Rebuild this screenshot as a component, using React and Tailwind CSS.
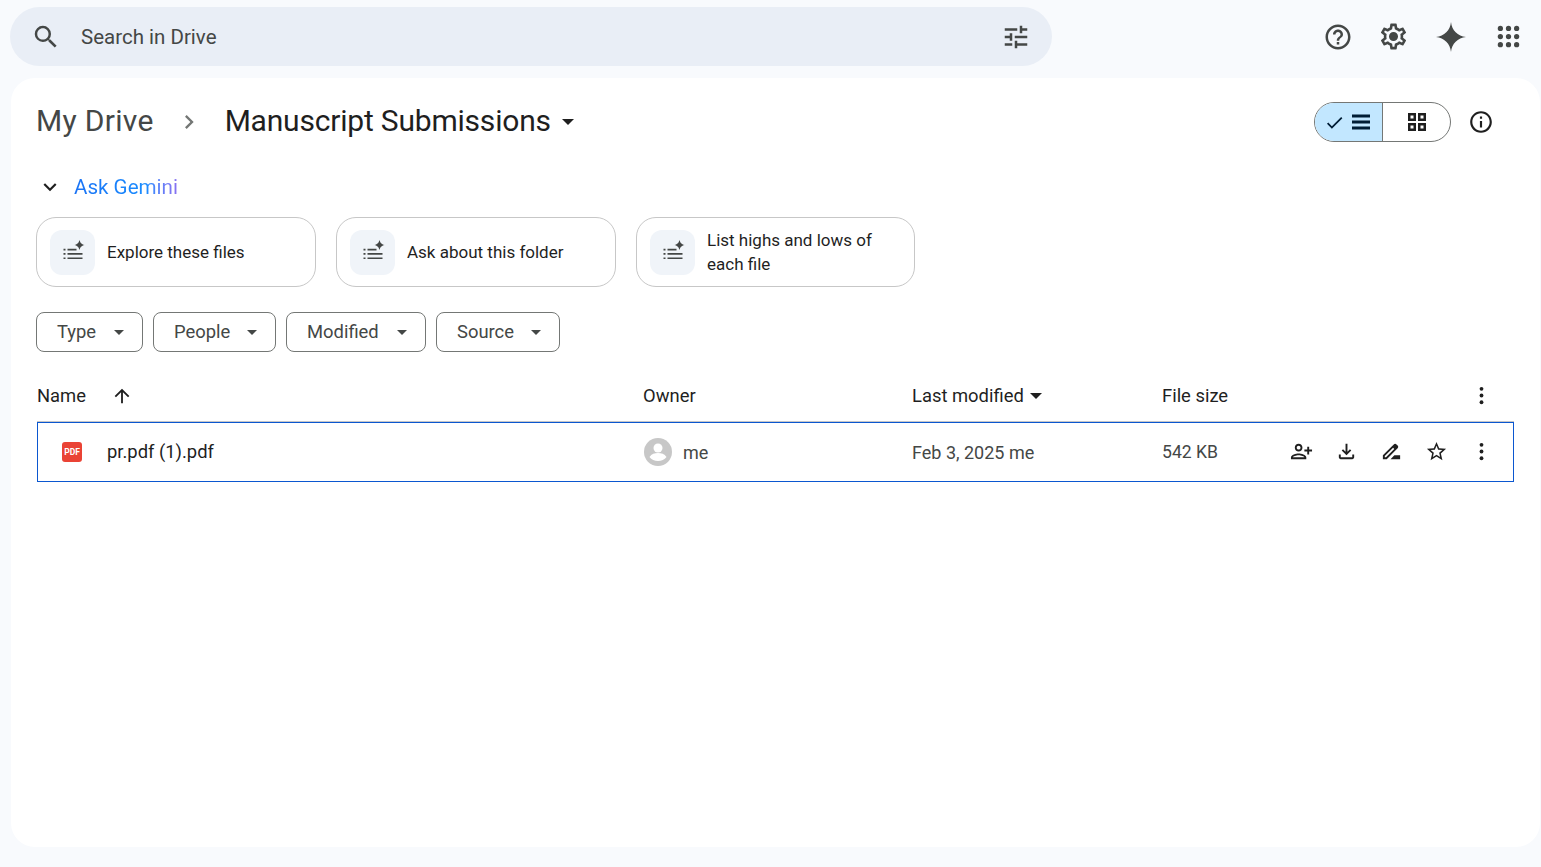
import React from "react";

function Icon({ d, className = "", flip }) {
  return (
    <svg viewBox="0 0 24 24" fill="currentColor" className={className}>
      <path d={d} transform={flip ? "matrix(-1 0 0 1 24 0)" : undefined} />
    </svg>
  );
}

const paths = {
  search: "M15.5 14h-.79l-.28-.27A6.471 6.471 0 0 0 16 9.5 6.5 6.5 0 1 0 9.5 16c1.61 0 3.09-.59 4.23-1.57l.27.28v.79l5 4.99L20.49 19l-4.99-5zm-6 0C7.01 14 5 11.99 5 9.5S7.01 5 9.5 5 14 7.01 14 9.5 11.99 14 9.5 14z",
  tune: "M3 17v2h6v-2H3zM3 5v2h10V5H3zm10 16v-2h8v-2h-8v-2h-2v6h2zM7 9v2H3v2h4v2h2V9H7zm14 4v-2H11v2h10zm-6-4h2V7h4V5h-4V3h-2v6z",
  help: "M11 18h2v-2h-2v2zm1-16C6.48 2 2 6.48 2 12s4.48 10 10 10 10-4.48 10-10S17.52 2 12 2zm0 18c-4.41 0-8-3.59-8-8s3.59-8 8-8 8 3.59 8 8-3.59 8-8 8zm0-14c-2.21 0-4 1.79-4 4h2c0-1.1.9-2 2-2s2 .9 2 2c0 2-3 1.75-3 5h2c0-2.25 3-2.5 3-5 0-2.21-1.79-4-4-4z",
  settings: "M19.43 12.98c.04-.32.07-.64.07-.98 0-.34-.03-.66-.07-.98l2.11-1.65c.19-.15.24-.42.12-.64l-2-3.46c-.09-.16-.26-.25-.44-.25-.06 0-.12.01-.17.03l-2.49 1c-.52-.4-1.08-.73-1.69-.98l-.38-2.65C14.46 2.18 14.25 2 14 2h-4c-.25 0-.46.18-.49.42l-.38 2.65c-.61.25-1.17.59-1.69.98l-2.49-1c-.06-.02-.12-.03-.18-.03-.17 0-.34.09-.43.25l-2 3.46c-.13.22-.07.49.12.64l2.11 1.65c-.04.32-.07.65-.07.98 0 .33.03.66.07.98l-2.11 1.65c-.19.15-.24.42-.12.64l2 3.46c.09.16.26.25.44.25.06 0 .12-.01.17-.03l2.49-1c.52.4 1.08.73 1.69.98l.38 2.65c.03.24.24.42.49.42h4c.25 0 .46-.18.49-.42l.38-2.65c.61-.25 1.17-.59 1.69-.98l2.49 1c.06.02.12.03.18.03.17 0 .34-.09.43-.25l2-3.46c.12-.22.07-.49-.12-.64l-2.11-1.65zm-1.98-1.71c.04.31.05.52.05.73 0 .21-.02.43-.05.73l-.14 1.13.89.7 1.08.84-.7 1.21-1.27-.51-1.04-.42-.9.68c-.43.32-.84.56-1.25.73l-1.06.43-.16 1.13-.2 1.35h-1.4l-.19-1.35-.16-1.13-1.06-.43c-.43-.18-.83-.41-1.23-.71l-.91-.7-1.06.43-1.27.51-.7-1.21 1.08-.84.89-.7-.14-1.13c-.03-.31-.05-.54-.05-.74s.02-.43.05-.73l.14-1.13-.89-.7-1.08-.84.7-1.21 1.27.51 1.04.42.9-.68c.43-.32.84-.56 1.25-.73l1.06-.43.16-1.13.2-1.35h1.39l.19 1.35.16 1.13 1.06.43c.43.18.83.41 1.23.71l.91.7 1.06-.43 1.27-.51.7 1.21-1.07.85-.89.7.14 1.13zM12 8.5a3.5 3.5 0 1 0 0 7 3.5 3.5 0 0 0 0-7z",
  spark: "M12 2C12.5 7.5 16.5 11.5 22 12 16.5 12.5 12.5 16.5 12 22 11.5 16.5 7.5 12.5 2 12 7.5 11.5 11.5 7.5 12 2z",
  info: "M11 7h2v2h-2zm0 4h2v6h-2zm1-9C6.48 2 2 6.48 2 12s4.48 10 10 10 10-4.48 10-10S17.52 2 12 2zm0 18c-4.41 0-8-3.59-8-8s3.59-8 8-8 8 3.59 8 8-3.59 8-8 8z",
  check: "M9 16.17L4.83 12l-1.42 1.41L9 19 21 7l-1.41-1.41z",
  lines: "M3 4.500h18v3H3zm0 6h18v3H3zm0 6h18v3H3z",
  grid: "M3 3v8h8V3H3zm5.500 5.500h-3v-3h3v3zM3 13v8h8v-8H3zm5.500 5.500h-3v-3h3v3zM13 3v8h8V3h-8zm5.500 5.500h-3v-3h3v3zM13 13v8h8v-8h-8zm5.500 5.500h-3v-3h3v3z",
  chevronRight: "M10 6L8.59 7.41 13.17 12l-4.58 4.59L10 18l6-6z",
  chevronDown: "M7.41 8.59L12 13.17l4.59-4.58L18 10l-6 6-6-6z",
  arrowUp: "M4 12l1.41 1.41L11 7.83V20h2V7.83l5.58 5.59L20 12l-8-8-8 8z",
  addPerson: "M15 12c2.21 0 4-1.79 4-4s-1.79-4-4-4-4 1.79-4 4 1.79 4 4 4zm0-6c1.1 0 2 .9 2 2s-.9 2-2 2-2-.9-2-2 .9-2 2-2zm0 8c-2.67 0-8 1.34-8 4v2h16v-2c0-2.66-5.33-4-8-4zm-6 4c.22-.72 3.31-2 6-2 2.7 0 5.8 1.29 6 2H9zm-3-3v-3h3v-2H6V7H4v3H1v2h3v3h2z",
  download: "M18 15v3H6v-3H4v3c0 1.1.9 2 2 2h12c1.1 0 2-.9 2-2v-3h-2zm-1-4l-1.41-1.41L13 12.17V4h-2v8.17L8.41 9.59 7 11l5 5 5-5z",
  rename: "M18.41 5.8L17.2 4.59c-.78-.78-2.05-.78-2.83 0l-2.68 2.68L3 15.96V20h4.04l8.74-8.74 2.63-2.63c.79-.78.79-2.05 0-2.83zM6.21 18H5v-1.21l8.66-8.66 1.21 1.21L6.21 18zM11 20l4-4h6v4H11z",
  star: "M22 9.24l-7.19-.62L12 2 9.19 8.63 2 9.24l5.46 4.73L5.82 21 12 17.27 18.18 21l-1.63-7.03L22 9.24zM12 15.4l-3.76 2.27 1-4.28-3.32-2.88 4.38-.38L12 6.1l1.71 4.04 4.38.38-3.32 2.88 1 4.28L12 15.4z",
};

function Caret({ className = "" }) {
  return (
    <svg viewBox="0 0 10 5" fill="currentColor" className={className}>
      <path d="M0 0h10L5 5z" />
    </svg>
  );
}

function AppsIcon() {
  const spots = [3.5, 10, 16.5];
  return (
    <svg viewBox="0 0 20 20" fill="#444746" className="w-[25px] h-[25px]">
      {spots.map((y) =>
        spots.map((x) => <circle key={`${x}-${y}`} cx={x} cy={y} r="2.100" />)
      )}
    </svg>
  );
}

function MoreIcon() {
  return (
    <svg viewBox="0 0 24 24" fill="#1f1f1f" className="w-[23px] h-[23px]">
      <circle cx="12" cy="5" r="2" />
      <circle cx="12" cy="12" r="2" />
      <circle cx="12" cy="19" r="2" />
    </svg>
  );
}

function SparkList() {
  return (
    <svg viewBox="0 0 24 24" fill="#444746" className="w-6 h-6">
      <path d="M18.500 0c.9 3.100 1.900 4.100 5 5-3.100.9-4.100 1.900-5 5-.9-3.100-1.900-4.100-5-5 3.100-.9 4.100-1.900 5-5z" />
      <path d="M6.500 8.700h9v1.700h-9zM6.500 13h15v1.700h-15zM6.500 17.400h15v1.700h-15z" />
      <path d="M2.500 8.700h2v1.700h-2zM2.500 13h2v1.700h-2zM2.500 17.400h2v1.700h-2z" />
    </svg>
  );
}

function Suggestion({ children, width = "w-[280px]" }) {
  return (
    <div className={`flex items-center h-[70px] border border-[#c7c7c7] rounded-[20px] pl-[13px] pr-4 gap-[12px] ${width}`}>
      <div className="w-[45px] h-[45px] shrink-0 rounded-xl bg-[#f0f4f9] flex items-center justify-center">
        <SparkList />
      </div>
      <div className="text-[17px] leading-6 text-[#1f1f1f]">{children}</div>
    </div>
  );
}

function Filter({ label, width }) {
  return (
    <button className={`flex items-center justify-between h-10 border border-[#747775] rounded-lg pl-5 pr-[18px] text-[18.4px] text-[#444746] ${width}`}>
      <span>{label}</span>
      <Caret className="w-[10px] h-[5px] text-[#444746]" />
    </button>
  );
}

export default function App() {
  return (
    <div className="h-[867px] bg-[#f8fafd] flex flex-col font-['Roboto',sans-serif] overflow-hidden">
      <header className="h-[78px] shrink-0 flex items-start pt-[7px] pl-[10px]">
        <div className="w-[1042px] h-[59px] rounded-[30px] bg-[#e9eef6] flex items-center pl-[21px] pr-[21px] text-[#444746]">
          <Icon d={paths.search} className="w-[30px] h-[30px]" />
          <span className="ml-5 pt-[2px] text-[20.5px] flex-1">Search in Drive</span>
          <Icon d={paths.tune} className="w-[30px] h-[30px]" />
        </div>
        <div className="flex items-center ml-[271px] h-[59px] text-[#444746]">
          <Icon d={paths.help} className="w-[30px] h-[30px]" />
          <Icon d={paths.settings} className="w-[31px] h-[31px] ml-[25px]" />
          <Icon d={paths.spark} className="w-[36px] h-[36px] ml-[24px]" />
          <div className="ml-[27px]"><AppsIcon /></div>
        </div>
      </header>

      <main className="w-[1529px] h-[769px] ml-[11px] bg-white rounded-[24px] pl-[25px] pr-[26px]">
        <div className="flex items-center h-[40px] mt-[24px]">
          <span className="pb-[3px] text-[30px] tracking-[0.3px] text-[#444746]">My Drive</span>
          <Icon d={paths.chevronRight} className="w-7 h-7 text-[#747775] ml-[21px]" />
          <span className="pb-[3px] text-[30px] tracking-[-0.2px] text-[#1f1f1f] ml-[22px]">Manuscript Submissions</span>
          <Caret className="w-3 h-[6px] ml-[11px] text-[#1f1f1f]" />
          <div className="ml-auto flex items-center">
            <div className="flex w-[137px] h-10 border border-[#747775] rounded-full overflow-hidden">
              <div className="w-[68px] bg-[#c2e7ff] border-r border-[#747775] flex items-center justify-center text-[#001d35]">
                <Icon d={paths.check} className="w-[21px] h-[21px] -ml-[1px]" />
                <Icon d={paths.lines} className="w-[24px] h-[24px] ml-[4px]" />
              </div>
              <div className="flex-1 flex items-center justify-center text-[#1f1f1f]">
                <Icon d={paths.grid} className="w-[24px] h-[24px]" />
              </div>
            </div>
            <Icon d={paths.info} className="w-[26px] h-[26px] ml-[17px] mr-[20px] text-[#1f1f1f]" />
          </div>
        </div>

        <div className="flex items-center mt-[30px] h-[30px] ml-[1px]">
          <Icon d={paths.chevronDown} className="w-[26px] h-[26px] text-[#1f1f1f]" />
          <span className="ml-[11px] text-[20.6px] bg-linear-to-r from-[#1a73f5] via-[#1a8cff] via-70% to-[#8a70f0] bg-clip-text text-transparent">Ask Gemini</span>
        </div>

        <div className="flex gap-5 mt-[15px]">
          <Suggestion>Explore these files</Suggestion>
          <Suggestion>Ask about this folder</Suggestion>
          <Suggestion width="w-[279px]">List highs and lows of each file</Suggestion>
        </div>

        <div className="flex gap-[10px] mt-[25px]">
          <Filter label="Type" width="w-[107px]" />
          <Filter label="People" width="w-[123px]" />
          <Filter label="Modified" width="w-[140px]" />
          <Filter label="Source" width="w-[124px]" />
        </div>

        <div className="w-[1477px] mt-[25px] ml-[1px]">
          <div className="grid grid-cols-[606px_269px_250px_1fr] items-center h-[45px] pb-[6px] border-b border-[#c7c7c7] text-[18.4px] text-[#1f1f1f]">
            <div className="flex items-center">
              <span>Name</span>
              <Icon d={paths.arrowUp} className="w-[22px] h-[22px] ml-[25px]" />
            </div>
            <div>Owner</div>
            <div className="flex items-center">
              <span>Last modified</span>
              <Caret className="w-3 h-[6px] ml-[6px] text-[#1f1f1f]" />
            </div>
            <div className="flex items-center justify-between pr-[21.5px]">
              <span>File size</span>
              <MoreIcon />
            </div>
          </div>

          <div className="grid grid-cols-[605px_269px_250px_1fr] items-center h-[60px] border border-[#0b57d0] text-[#444746] text-[18px]">
            <div className="flex items-center text-[#1f1f1f]">
              <div className="ml-6 w-5 h-5 rounded-[3px] bg-[#ea4335] flex items-center justify-center text-white text-[8.5px] font-bold leading-none">PDF</div>
              <span className="ml-[25px] text-[18.4px]">pr.pdf (1).pdf</span>
            </div>
            <div className="flex items-center">
              <svg viewBox="0 0 28 28" className="w-[28px] h-[28px] ml-[1px]">
                <circle cx="14" cy="14" r="14" fill="#c7c7c7" />
                <circle cx="14" cy="10" r="4.500" fill="#fff" />
                <path d="M5.500 19c2-3.200 5.200-4 8.500-4s6.500.8 8.500 4c-2 2.600-5 4-8.500 4s-6.500-1.400-8.500-4z" fill="#fff" />
              </svg>
              <span className="ml-[11px]">me</span>
            </div>
            <div>Feb 3, 2025 me</div>
            <div className="flex items-center justify-between pr-[20.5px] text-[#1f1f1f]">
              <span className="text-[#444746] text-[17.6px]">542 KB</span>
              <div className="flex items-center gap-[22px]">
                <Icon d={paths.addPerson} flip className="w-[23px] h-[23px]" />
                <Icon d={paths.download} className="w-[23px] h-[23px]" />
                <Icon d={paths.rename} className="w-[23px] h-[23px]" />
                <Icon d={paths.star} className="w-[23px] h-[23px]" />
                <MoreIcon />
              </div>
            </div>
          </div>
        </div>
      </main>
    </div>
  );
}
